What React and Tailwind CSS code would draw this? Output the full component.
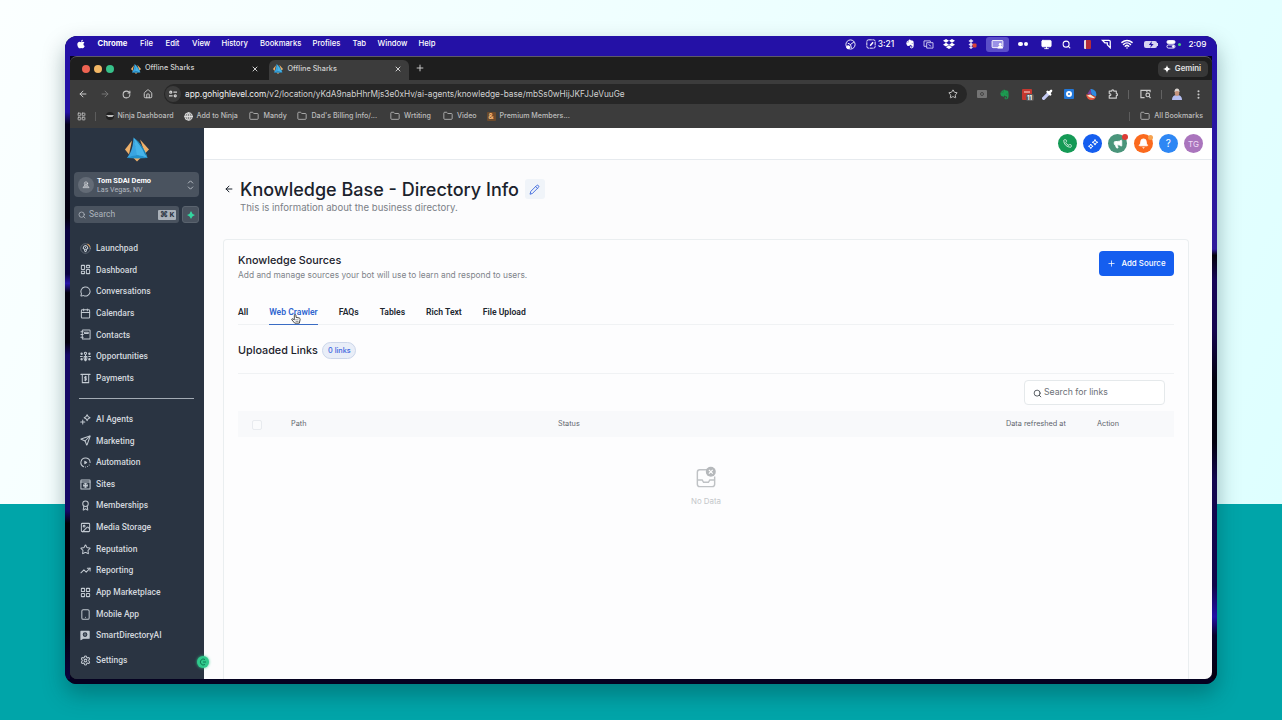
import React from 'react';
import {
    ArrowLeft, ArrowRight, RotateCw, House, Star, Folder, Search, Wifi, MoreVertical,
    MessageCircle, Calendar, LayoutGrid, Send, Award, Image, TrendingUp, Settings,
    Phone, Plus, X, Megaphone, Bell, Monitor, Globe, LayoutDashboard
} from 'lucide-react';
import { FaApple, FaDropbox, FaEvernote } from 'react-icons/fa';

const menuItems = [
    { label: 'Chrome', width: 'w-[42.5px] font-bold' },
    { label: 'File', width: 'w-[25.5px] font-medium' },
    { label: 'Edit', width: 'w-[26.5px] font-medium' },
    { label: 'View', width: 'w-[29.5px] font-medium' },
    { label: 'History', width: 'w-[38.5px] font-medium' },
    { label: 'Bookmarks', width: 'w-[52.5px] font-medium' },
    { label: 'Profiles', width: 'w-[40px] font-medium' },
    { label: 'Tab', width: 'w-[25px] font-medium' },
    { label: 'Window', width: 'w-[41px] font-medium' },
    { label: 'Help', width: 'w-[30px] font-medium' }
];

// Wraps raw paths so they can be used like the lucide icons in the nav lists
const lineIcon = (children) => function LineIcon({ className, strokeWidth = 2 }) {
    return (
        <svg viewBox="0 0 24 24" className={className} fill="none" stroke="currentColor" strokeWidth={strokeWidth} strokeLinecap="round" strokeLinejoin="round">
            {children}
        </svg>
    );
};

const LaunchpadIcon = lineIcon(
    <>
        <circle cx="12" cy="12" r="10.500" strokeWidth="1.200" opacity=".6" />
        <path d="M17 2.800a10.500 10.500 0 0 1 5 6" stroke="#d99a58" />
        <path d="M9.500 13.500 7 12q0-5.500 5-6.500 5 1 5 6.500l-2.500 1.500zM10 14v3l2 2 2-2v-3M12 9.500v.5" />
    </>
);
const ContactsIcon = lineIcon(
    <>
        <rect x="5" y="2" width="17" height="20" rx="1.500" />
        <path d="M2 6h5M2 12h5M2 18h5M10 7h8v3h-8z" />
    </>
);
const OpportunitiesIcon = lineIcon(
    <>
        <circle cx="12" cy="5" r="2.500" />
        <circle cx="3.500" cy="6" r="1.500" fill="currentColor" />
        <circle cx="20.500" cy="6" r="1.500" fill="currentColor" />
        <circle cx="3.500" cy="18" r="1.500" fill="currentColor" />
        <circle cx="20.500" cy="18" r="1.500" fill="currentColor" />
        <path d="M12 8v12M9 12h6v5l-2 4h-2l-2-4zM1 12h4M19 12h4" />
    </>
);
const PaymentsIcon = lineIcon(
    <>
        <path d="M2 3h20M5 3v18h14V3" />
        <path d="M14.500 8.500h-3.500q-2 1.700 0 3.500h2q2 1.700 0 3.500H9.500M12 7v10" />
    </>
);
const SparkIcon = lineIcon(
    <>
        <path d="M15.500 1.500q1 5 6.500 6.500-5.500 1.500-6.500 6.500-1-5-6.500-6.500 5.500-1.500 6.500-6.500zM6 13v9M1.500 17.500h9" />
    </>
);
const AutomationIcon = lineIcon(
    <>
        <path d="M8 21.200A10 10 0 1 1 22 12M12 22h.1M16.500 20.800h.1M20 17.500h.1" />
        <path d="M10.500 9.500v5l4-2.500z" fill="currentColor" />
    </>
);
const SitesIcon = lineIcon(
    <>
        <rect x="2" y="2" width="20" height="20" rx="1" />
        <path d="M2 6.500h20" />
        <circle cx="12" cy="14" r="4" />
        <path d="M8 14h8M12 10v8" />
    </>
);
const MobileIcon = lineIcon(
    <>
        <rect x="4" y="1.500" width="16" height="21" rx="3" />
        <path d="M12 18v.1" />
    </>
);
const DirectoryIcon = lineIcon(
    <>
        <path d="M2 3h18v15H7l-5 3z" fill="currentColor" />
        <circle cx="11" cy="10" r="4" stroke="#2a3442" fill="#65707d" />
    </>
);
const LocationIcon = lineIcon(
    <>
        <circle cx="12" cy="7.500" r="5" />
        <path d="M8 13 3 20h18l-5-7M12 7v6M8 17h8" />
    </>
);
const PenIcon = lineIcon(
    <>
        <path d="M2.500 21.500 4 16 16.500 3.500q2-2 4 0t0 4L8 20zM14.500 5.500l4 4" />
    </>
);
const PuzzleIcon = lineIcon(
    <>
        <path d="M3 5h6q0-3 2.500-3T14 5h6v6q3 0 3 2.500T20 16v6H3v-6q4 0 4-2.500T3 11z" />
    </>
);

const mainNav = [
    { label: 'Launchpad', icon: LaunchpadIcon },
    { label: 'Dashboard', icon: LayoutDashboard },
    { label: 'Conversations', icon: MessageCircle },
    { label: 'Calendars', icon: Calendar },
    { label: 'Contacts', icon: ContactsIcon },
    { label: 'Opportunities', icon: OpportunitiesIcon },
    { label: 'Payments', icon: PaymentsIcon }
];

const toolNav = [
    { label: 'AI Agents', icon: SparkIcon },
    { label: 'Marketing', icon: Send },
    { label: 'Automation', icon: AutomationIcon },
    { label: 'Sites', icon: SitesIcon },
    { label: 'Memberships', icon: Award },
    { label: 'Media Storage', icon: Image },
    { label: 'Reputation', icon: Star },
    { label: 'Reporting', icon: TrendingUp },
    { label: 'App Marketplace', icon: LayoutGrid },
    { label: 'Mobile App', icon: MobileIcon },
    { label: 'SmartDirectoryAI', icon: DirectoryIcon }
];

const sourceTabs = ['All', 'Web Crawler', 'FAQs', 'Tables', 'Rich Text', 'File Upload'];

function SharkLogo({ className }) {
    return (
        <svg viewBox="0 0 24 24" className={className}>
            <path d="M7 3 L0 12 L4 17 Z" fill="#eeb06a" />
            <path d="M15 2 L24 12 L20 16 Z" fill="#eeb06a" />
            <path d="M8 20 L12 24 L16 20 Z" fill="#eeb06a" />
            <path d="M8.500 0 C8 8 7 14 2 20.500 L13 18 Z" fill="#3aa5e2" />
            <path d="M8.500 0 C15 5 20 12 22.500 20.500 L12 18 Z" fill="#46b4ea" />
            <path d="M8.500 0 C15 5 20 12 22.500 20 L20 17 C17 10 13 5 8.500 0 Z" fill="#1d7fae" />
            <path d="M2 20.500 Q12 15 22.500 20.500 L12 21 Z" fill="#2391cc" />
        </svg>
    );
}

function Slot({ className, children }) {
    return <div className={`flex shrink-0 items-center justify-center ${className}`}>{children}</div>;
}

function MenuBar() {
    return (
        <div className="flex h-5 shrink-0 items-center bg-[#2411a6] pb-[5px] pl-[11px] pt-px text-white">
            <FaApple className="mr-[11.500px] h-[10px] w-[10px]" />
            {menuItems.map(item => (
                <span key={item.label} className={`shrink-0 whitespace-nowrap text-[7.7px] ${item.width}`}>
                    {item.label}
                </span>
            ))}
            <div className="ml-auto flex h-[15px] items-center">
                <Slot className="w-5">
                    <svg viewBox="0 0 12 12" className="h-[11px] w-[11px]" fill="none" stroke="white">
                        <circle cx="6" cy="6" r="5" />
                        <path d="M3 4.500 L6 6 L10 3 M6 6 L7 10" />
                        <circle cx="3.500" cy="9" r="1.700" fill="white" />
                    </svg>
                </Slot>
                <Slot className="w-10 gap-[2px]">
                    <svg viewBox="0 0 12 12" className="h-[10px] w-[10px]" fill="none" stroke="white" strokeWidth="1.1">
                        <rect x="1" y="1" width="10" height="10" rx="2" strokeDasharray="4 .6" />
                        <path d="M5 8 L8.500 4" strokeWidth="1.800" />
                    </svg>
                    <span className="text-[8.4px] font-medium">3:21</span>
                </Slot>
                <Slot className="w-[20px]"><FaEvernote className="h-[10px] w-[10px]" /></Slot>
                <Slot className="w-[16px]">
                    <svg viewBox="0 0 12 10" className="h-[9px] w-[11px]" fill="none" stroke="#d8d4f5">
                        <path d="M8 2.500V1H1v6h3M4 3h7v6H4z M6 5l3 2" />
                    </svg>
                </Slot>
                <Slot className="w-[26px]"><FaDropbox className="h-[12px] w-[12px]" /></Slot>
                <Slot className="w-5">
                    <svg viewBox="0 0 10 10" className="h-[10px] w-[10px]">
                        <path d="M4 0l2.500 2L4 4 1.500 2zM4 3.500l2.500 2L4 7.500 1.500 5.500zM4 7l2 1.500L4 10 2 8.500z" fill="#ded9f5" />
                        <rect x="5.500" y="4.500" width="4" height="4" rx="1" fill="#dc4438" />
                    </svg>
                </Slot>
                <Slot className="ml-1 h-[15px] w-[23px] rounded-[3px] bg-[#5b4fc8]">
                    <svg viewBox="0 0 13 10" className="h-[9px] w-[13px]">
                        <rect x=".5" y=".5" width="12" height="8" rx="1" fill="#9a93e6" stroke="white" />
                        <circle cx="9.500" cy="5" r="1.600" fill="white" />
                        <path d="M6.500 9.500q0-3 3-3t3 3z" fill="white" />
                    </svg>
                </Slot>
                <Slot className="w-7 gap-px">
                    <div className="h-[4.500px] w-[4.500px] rounded-full bg-white" />
                    <div className="h-[4.500px] w-[4.500px] rounded-full bg-white" />
                </Slot>
                <Slot className="w-[18px]"><Monitor className="h-[11px] w-[11px] fill-white" /></Slot>
                <Slot className="w-[22px]"><Search className="h-[9px] w-[9px]" strokeWidth={2.8} /></Slot>
                <Slot className="w-5">
                    <div className="h-[9px] w-[7px] rounded-[1px] border-l-2 border-[#ead9dc] bg-[#b52c39]" />
                </Slot>
                <Slot className="w-[18px]">
                    <svg viewBox="0 0 12 12" className="h-[10px] w-[11px]" fill="none" stroke="white" strokeWidth="1.500">
                        <path d="M1 1.500h8q1.500 0 1.500 1.500v7.500L7 7V4.500H4z" />
                    </svg>
                </Slot>
                <Slot className="w-6"><Wifi className="h-[12px] w-[12px]" strokeWidth={3} /></Slot>
                <Slot className="w-6">
                    <div className="flex h-[7px] w-[13px] items-center justify-center rounded-[2px] bg-[#d8d5f2]">
                        <svg viewBox="0 0 8 8" className="h-[7px] w-[8px]" fill="#2411a6"><path d="M5 0L1.500 4.500H4L3 8l4-4.500H4.500z" /></svg>
                    </div>
                    <div className="h-[3px] w-px bg-[#d8d5f2]" />
                </Slot>
                <Slot className="w-5 gap-[2px]">
                    <svg viewBox="0 0 10 10" className="h-[9px] w-[10px]" stroke="white" fill="none">
                        <rect x=".5" y=".5" width="9" height="3.500" rx="1.700" fill="white" />
                        <rect x=".5" y="5.500" width="9" height="3.500" rx="1.700" />
                        <circle cx="7.500" cy="7.200" r="1" fill="white" />
                    </svg>
                    <div className="h-[3px] w-[3px] rounded-full bg-[#45d37c]" />
                </Slot>
                <span className="w-[34px] pl-[5.500px] text-[8.2px] font-medium">2:09</span>
            </div>
        </div>
    );
}

function BrowserTab({ active }) {
    return (
        <div className={`flex items-center ${active ? 'h-[20px] w-[140px] self-end rounded-t-[6px] bg-[#3c3c3c] pb-[2px] pl-[4px]' : 'h-[23px] w-[138px] pl-[2.500px]'}`}>
            <SharkLogo className="h-[10px] w-[10px]" />
            <span className={`ml-[4.500px] text-[7.3px] font-medium text-[#cfcfcf] ${active ? '' : 'pb-[.5px]'}`}>Offline Sharks</span>
            <X className={`ml-auto h-[8px] w-[8px] text-[#dcdcdc] ${active ? 'mr-[7px]' : 'mr-[7px]'}`} strokeWidth={2.8} />
        </div>
    );
}

function TabStrip() {
    return (
        <div className="flex h-[23px] shrink-0 items-center bg-[#1e1e1e] pl-3 pr-1">
            <div className="flex w-[46px] gap-[4px]">
                <div className="h-[8px] w-[8px] rounded-full bg-[#ee6352]" />
                <div className="h-[8px] w-[8px] rounded-full bg-[#f2b765]" />
                <div className="h-[8px] w-[8px] rounded-full bg-[#37c18a]" />
            </div>
            <BrowserTab />
            <div className="w-[3px]" />
            <BrowserTab active />
            <Plus className="mb-px ml-[6px] h-[10px] w-[10px] text-[#d4d4d4]" strokeWidth={2.2} />
            <div className="ml-auto flex h-4 w-[50px] items-center justify-center gap-1 rounded-[5px] bg-[#373737] pr-[2px] text-[7.8px] font-semibold text-[#e4e4e4]">
                <svg viewBox="0 0 10 10" className="h-2 w-2" fill="white"><path d="M5 0Q5.500 4.500 10 5 5.500 5.500 5 10 4.500 5.500 0 5 4.500 4.500 5 0z" /></svg>
                Gemini
            </div>
        </div>
    );
}

function Toolbar() {
    return (
        <div className="flex h-[28px] shrink-0 items-center bg-[#3c3c3c] pl-2 text-[#c9c9c9]">
            <ArrowLeft className="h-[10px] w-[10px]" strokeWidth={2.4} />
            <ArrowRight className="ml-[12px] h-[10px] w-[10px] text-[#7c7c7c]" strokeWidth={2.2} />
            <RotateCw className="ml-[11.500px] h-[9px] w-[9px]" strokeWidth={2.8} />
            <House className="ml-[12px] h-[10px] w-[10px]" strokeWidth={2.4} />
            <div className="ml-[11.500px] flex h-5 w-[803px] items-center rounded-full bg-[#272727] pl-px pr-[9px]">
                <div className="flex h-4 w-4 items-center justify-center rounded-full bg-[#3c3c3c]">
                    <svg viewBox="0 0 10 10" className="h-2 w-2" fill="none" stroke="#d4d4d4" strokeWidth="1.500">
                        <circle cx="2.200" cy="2.700" r="1.300" />
                        <path d="M5.500 2.700H10M0 7.300H4.500" />
                        <circle cx="7.800" cy="7.300" r="1.300" />
                    </svg>
                </div>
                <span className="ml-[4px] whitespace-nowrap text-[8.28px] text-[#d2d2d2]">
                    <span className="text-[#f0f0f0]">app.gohighlevel.com</span>/v2/location/yKdA9nabHhrMjs3e0xHv/ai-agents/knowledge-base/mbSs0wHijJKFJJeVuuGe
                </span>
                <Star className="ml-auto h-[10px] w-[10px]" strokeWidth={2.3} />
            </div>
            <div className="ml-[4px] flex items-center">
                <Slot className="w-[22px]">
                    <div className="flex h-[8px] w-[10px] items-center justify-center rounded-[1px] bg-[#747474]">
                        <div className="h-[4px] w-[4px] rounded-full border border-[#444444]" />
                    </div>
                </Slot>
                <Slot className="w-[23px]"><FaEvernote className="h-[11px] w-[11px] text-[#1c9a50]" /></Slot>
                <Slot className="w-[21px]">
                    <div className="relative h-[11px] w-[10px] rounded-[1px] bg-[#c6372f]">
                        <div className="mx-[2px] mt-[2px] h-[2px] bg-[#e58b84]" />
                        <span className="absolute left-[4px] top-[5px] rounded-[2px] bg-[#5a5a5a] px-[1.500px] text-[6px] font-bold leading-[7px] text-white">11</span>
                    </div>
                </Slot>
                <Slot className="w-[21px]">
                    <svg viewBox="0 0 10 10" className="h-[11px] w-[11px]">
                        <path d="M1.500 8.500L6.500 3.500" stroke="#c3c9f2" strokeWidth="3" strokeLinecap="round" />
                        <path d="M5 2.500L7.500 5M6.500 3.500L8.300 1.700" stroke="white" strokeWidth="2.200" strokeLinecap="round" />
                    </svg>
                </Slot>
                <Slot className="w-[22px]">
                    <div className="flex h-[10px] w-[10px] items-center justify-center rounded-[1px] bg-[#2277d8]">
                        <div className="h-[6px] w-[6px] rounded-full border-2 border-white" />
                    </div>
                </Slot>
                <Slot className="w-[22px]">
                    <svg viewBox="0 0 10 10" className="h-[11px] w-[11px]">
                        <path d="M4 0a5 5 0 0 1 5 7L5 5z" fill="#2f8be0" />
                        <path d="M4 0L5 5 1 5z" fill="#7a3fa0" />
                        <path d="M0 5q1 5 5 5 3 0 4-3L4 5z" fill="#e8553c" />
                        <path d="M1 6q3 3 7 2L4 5z" fill="#f7e9d0" />
                    </svg>
                </Slot>
                <Slot className="w-[21px]"><PuzzleIcon className="h-[10px] w-[10px]" strokeWidth={2.8} /></Slot>
                <Slot className="w-[10px]"><div className="h-[9px] w-px bg-[#626262]" /></Slot>
                <Slot className="w-6">
                    <svg viewBox="0 0 12 10" className="h-[10px] w-[11px]" fill="none" stroke="#c9c9c9" strokeWidth="1.300">
                        <path d="M5 9H1V1h10v2" />
                        <circle cx="8.500" cy="6" r="2" />
                        <path d="M10 7.500L11.500 9.500M7.500 1v2" />
                    </svg>
                </Slot>
                <Slot className="w-2"><div className="h-[9px] w-px bg-[#626262]" /></Slot>
                <Slot className="w-6">
                    <svg viewBox="0 0 12 12" className="h-[12px] w-[12px]">
                        <path d="M1 12q0-5 5-5t5 5z" fill="#b4bdf0" />
                        <rect x="3.800" y="1" width="4.400" height="7" rx="2.200" fill="#c4937c" />
                        <path d="M3.500 4q0-3.500 2.500-3.500T8.500 4Q6 2 3.500 4z" fill="#d9d4d0" />
                    </svg>
                </Slot>
                <Slot className="w-[18px]"><MoreVertical className="h-[11px] w-[11px]" strokeWidth={2.5} /></Slot>
            </div>
        </div>
    );
}

function BookmarkFolder({ label, className }) {
    return (
        <div className={`flex shrink-0 items-center gap-[4.500px] ${className}`}>
            <Folder className="h-[10px] w-[10px]" strokeWidth={2} />
            {label}
        </div>
    );
}

function BookmarksBar() {
    return (
        <div className="flex h-[20px] shrink-0 items-center whitespace-nowrap bg-[#3c3c3c] pb-[3px] pl-[7px] pr-[9px] text-[7.1px] font-medium text-[#bdbdbd]">
            <LayoutGrid className="h-[9px] w-[9px]" strokeWidth={2.4} />
            <div className="ml-[9px] h-[9px] w-px bg-[#5c5c5c]" />
            <div className="ml-[9.500px] flex w-[78px] items-center gap-[4px]">
                <svg viewBox="0 0 10 10" className="h-2 w-2"><circle cx="5" cy="5" r="5" fill="#222222" /><path d="M0 4h10L8 6H3z" fill="#eeeeee" /></svg>
                Ninja Dashboard
            </div>
            <div className="flex w-[65.500px] items-center gap-[4px]">
                <Globe className="h-[9px] w-[9px] fill-[#8a8a8a] text-[#e4e4e4]" strokeWidth={2.4} />
                Add to Ninja
            </div>
            <BookmarkFolder label="Mandy" className="w-[48px]" />
            <BookmarkFolder label="Dad's Billing Info/..." className="w-[92.500px]" />
            <BookmarkFolder label="Wrtiting" className="w-[53px]" />
            <BookmarkFolder label="Video" className="w-[44px]" />
            <div className="flex items-center gap-[4px]">
                <span className="flex h-[9px] w-[9px] items-center justify-center rounded-[1px] bg-[#6b4a2c] text-[8px] font-bold leading-none text-[#f0b070]">&amp;</span>
                Premium Members...
            </div>
            <div className="ml-auto h-[9px] w-px bg-[#5c5c5c]" />
            <BookmarkFolder label="All Bookmarks" className="ml-[10px]" />
        </div>
    );
}

function NavItem({ label, icon: Icon }) {
    return (
        <div className="flex h-[21.65px] shrink-0 items-center gap-[5.500px] pl-[9.500px]">
            <Icon className="h-[11px] w-[11px] text-[#c2c9d1]" strokeWidth={2.2} />
            <span className="whitespace-nowrap text-[8.5px] font-medium text-[#d2d7dd]">{label}</span>
        </div>
    );
}

function Sidebar() {
    return (
        <div className="relative flex w-[134px] shrink-0 flex-col bg-[#2a3442] font-['Roboto',sans-serif]">
            <SharkLogo className="ml-[55px] mt-[9px] h-[25px] w-[24px] shrink-0" />
            <div className="mx-[4px] mt-[10px] flex h-[25px] w-[125px] shrink-0 items-center rounded-[4px] bg-[#4a535f] pl-[4px] pr-[4px]">
                <div className="flex h-[16px] w-[16px] items-center justify-center rounded-full bg-[#636b76]">
                    <LocationIcon className="h-[8px] w-[8px] text-[#e0e3e6]" />
                </div>
                <div className="ml-[3px] pt-px">
                    <div className="text-[7.4px] font-bold leading-[9px] text-white">Tom SDAI Demo</div>
                    <div className="text-[7.1px] leading-[9px] text-[#b4bac1]">Las Vegas, NV</div>
                </div>
                <svg viewBox="0 0 8 12" className="ml-auto mr-[1px] h-[10px] w-[7px]" fill="none" stroke="#b4bac1" strokeWidth="1.200">
                    <path d="M1 4l3-3 3 3M1 8l3 3 3-3" />
                </svg>
            </div>
            <div className="ml-[4px] mt-[9px] flex shrink-0 gap-[3px]">
                <div className="flex h-[17px] w-[105px] items-center rounded-[3px] bg-[#4a535f] pl-[4px] pr-[3px] text-[#aeb5bd]">
                    <Search className="h-[8px] w-[8px]" strokeWidth={2.5} />
                    <span className="ml-[3px] text-[8.5px]">Search</span>
                    <span className="ml-auto flex h-[10px] w-[18px] items-center justify-center gap-[2px] rounded-[1px] bg-[#aab1b9] text-[7.5px] font-bold text-[#2a3442]">
                        <span>⌘</span>
                        <span>K</span>
                    </span>
                </div>
                <div className="flex h-[17px] w-[17px] items-center justify-center rounded-[3px] border border-[#5a636e] bg-[#4a535f]">
                    <svg viewBox="0 0 10 10" className="h-2 w-2" fill="#33d6a0"><path d="M5 0Q6 4 10 5 6 6 5 10 4 6 0 5 4 4 5 0z" /></svg>
                </div>
            </div>
            <div className="mt-[14.500px] shrink-0">
                {mainNav.map(item => <NavItem key={item.label} {...item} />)}
            </div>
            <div className="ml-[9px] mr-[10px] mt-[9px] h-px shrink-0 bg-[#a3abb4]" />
            <div className="mt-[9.500px] shrink-0">
                {toolNav.map(item => <NavItem key={item.label} {...item} />)}
            </div>
            <div className="mt-[3.500px]">
                <NavItem label="Settings" icon={Settings} />
            </div>
            <div className="absolute -right-[5px] bottom-[11.500px] z-10 flex h-[12px] w-[12px] items-center justify-center rounded-full bg-[#2fc98c] shadow-[0_0_3px_#2fc98c]">
                <svg viewBox="0 0 8 8" className="h-[8px] w-[8px]" fill="none" stroke="#0f7d56"><path d="M6 1.500A3 3 0 1 0 6 6.500M4 4h3" /></svg>
            </div>
        </div>
    );
}

function HeaderActions() {
    return (
        <div className="flex h-[32px] shrink-0 items-center justify-end gap-[6.200px] border-b border-[#e6eaee] bg-white pr-[9px] text-white">
            <Slot className="h-[19px] w-[19px] rounded-full bg-[#159a56]"><Phone className="h-[9px] w-[9px]" /></Slot>
            <Slot className="h-[19px] w-[19px] rounded-full bg-[#155eef]">
                <svg viewBox="0 0 12 12" className="h-[12px] w-[12px]" fill="none" stroke="white">
                    <path d="M8 1.500l.8 2 2 .8-2 .8-.8 2-.8-2-2-.8 2-.8zM3.800 6l.7 1.600 1.600.7-1.600.7-.7 1.600-.7-1.600-1.600-.7 1.600-.7z" />
                </svg>
            </Slot>
            <Slot className="relative h-[19px] w-[19px] rounded-full bg-[#4a957b]">
                <Megaphone className="h-[10px] w-[10px] fill-white" />
                <div className="absolute -right-px top-0 h-[6px] w-[6px] rounded-full bg-[#dc3b34]" />
            </Slot>
            <Slot className="relative h-[19px] w-[19px] rounded-full bg-[#fb6a1e]">
                <Bell className="h-[11px] w-[11px] fill-white" />
                <div className="absolute right-0 top-[1px] h-[5px] w-[5px] rounded-full bg-[#f6a24f]" />
            </Slot>
            <Slot className="h-[19px] w-[19px] rounded-full bg-[#2e87f4] text-[10px]">?</Slot>
            <Slot className="h-[19px] w-[19px] rounded-full bg-[#aa75bd] text-[8px] text-[#f0dcf6]">TG</Slot>
        </div>
    );
}

function HandCursor() {
    return (
        <svg viewBox="0 0 12 12" className="absolute left-[22px] top-[13px] h-[10px] w-[10px]">
            <path d="M4 5V2q0-1.200 1-1.200T6 2v2l4 .8q1 .3 1 1.500L10 11H4.500L1 7q-.4-1.500 1-1.300L4 7z" fill="white" stroke="#3a3a3a" strokeWidth="1.100" />
            <path d="M5 7h4M5.500 9h3.500" stroke="#6a6a6a" strokeWidth=".8" />
        </svg>
    );
}

function NoData() {
    return (
        <div className="mt-[28px] flex flex-col items-center">
            <svg viewBox="0 0 24 26" className="h-[25px] w-[24px]" fill="none" stroke="#bfc2c5" strokeWidth="1.500">
                <path d="M13 5H5.500Q3 5 3 7.500V20q0 2.500 2.500 2.500h13Q21 22.500 21 20V12M3 15.500h5l1.500 2.500h5l1.500-2.500h5" />
                <circle cx="17" cy="7" r="5.200" fill="#b5b8bb" stroke="none" />
                <path d="M15 5l4 4M19 5l-4 4" stroke="white" strokeWidth="1.200" />
            </svg>
            <span className="mt-[6px] text-[7.9px] text-[#c4c7ca]">No Data</span>
        </div>
    );
}

function KnowledgeCard() {
    return (
        <div className="ml-[19px] mt-[23px] flex min-h-0 w-[966px] flex-1 flex-col rounded-t-[4px] border border-b-0 border-[#eaeef0] bg-[#fdfdfe] px-[14px]">
            <div className="mt-[11px] flex h-[31px] shrink-0 justify-between">
                <div>
                    <h2 className="mt-[3px] text-[10.8px] font-medium leading-[14px] text-[#1b222c]">Knowledge Sources</h2>
                    <p className="mt-px text-[8.4px] leading-[13px] text-[#7f848b]">Add and manage sources your bot will use to learn and respond to users.</p>
                </div>
                <button className="flex h-[25px] w-[75px] items-center justify-center gap-[5px] rounded-[4px] bg-[#155eef] text-[7.9px] font-medium text-white">
                    <Plus className="h-[9px] w-[9px]" />
                    Add Source
                </button>
            </div>
            <div className="mt-[19px] flex h-[24px] shrink-0 gap-[21px] border-b border-[#f0f2f4] font-['Roboto',sans-serif]">
                {sourceTabs.map(tab => (
                    <div key={tab} className={`relative h-[24px] whitespace-nowrap pt-[4px] text-[8.6px] font-semibold leading-[15px] ${tab === 'Web Crawler' ? 'border-b-[1.500px] border-[#3a6cc4] text-[#2f65cf]' : 'text-[#20262e]'}`}>
                        {tab}
                        {tab === 'Web Crawler' && <HandCursor />}
                    </div>
                ))}
            </div>
            <div className="flex h-[49px] shrink-0 items-center gap-[4.500px] border-b border-[#f0f2f4] pt-[3px]">
                <span className="pt-px text-[10.8px] font-medium text-[#1b222c]">Uploaded Links</span>
                <span className="flex h-[17px] w-[34px] items-center justify-center rounded-full border border-[#ccd6ea] bg-[#e9eef8] pt-px text-[7.3px] font-medium text-[#3e68de]">0 links</span>
            </div>
            <div className="mr-[9px] mt-[6px] flex h-[25px] w-[141px] shrink-0 items-center gap-[2px] self-end rounded-[4px] border border-[#e5e9eb] bg-white pl-[8px] pt-px text-[8.7px] text-[#6c7177]">
                <Search className="h-[9px] w-[9px] text-[#3f454c]" strokeWidth={2.3} />
                Search for links
            </div>
            <div className="mt-[6px] flex h-[26px] shrink-0 items-center bg-[#f8f9fb] pl-[14px] pt-px text-[7.3px] text-[#5f656d]">
                <div className="h-[10px] w-[10px] rounded-[2px] border border-[#e8ebef] bg-[#fafbfc]" />
                <span className="ml-[29px] w-[267px]">Path</span>
                <span className="w-[448px]">Status</span>
                <span className="w-[91px]">Data refreshed at</span>
                <span>Action</span>
            </div>
            <NoData />
        </div>
    );
}

function MainPage() {
    return (
        <div className="flex min-w-0 flex-1 flex-col bg-[#fcfcfd]">
            <HeaderActions />
            <div className="mt-[18px] flex h-[22px] shrink-0 items-center pl-5">
                <ArrowLeft className="h-[10px] w-[10px] text-[#1b222c]" strokeWidth={2.4} />
                <h1 className="ml-[6px] whitespace-nowrap text-[18px] font-medium text-[#1b222c]">Knowledge Base - Directory Info</h1>
                <div className="ml-[6px] flex h-[20px] w-[20px] items-center justify-center rounded-[3px] bg-[#f0f4f9]">
                    <PenIcon className="h-[11px] w-[11px] text-[#3c68dd]" />
                </div>
            </div>
            <p className="ml-9 h-[16px] shrink-0 whitespace-nowrap text-[9.6px] leading-[16px] text-[#7b8087]">This is information about the business directory.</p>
            <KnowledgeCard />
        </div>
    );
}

export default function App() {
    return (
        <div className="h-[720px] w-[1282px] overflow-hidden bg-[linear-gradient(to_bottom,transparent_504px,#00a5a9_504px),linear-gradient(115deg,#fbffff_0%,#eeffff_45%,#dcffff_100%)] pl-[65px] pt-9 font-['Inter',sans-serif] leading-normal">
            <div className="flex h-[648px] w-[1152px] flex-col overflow-hidden rounded-[12px] bg-[#05021f] shadow-[0_10px_22px_rgba(0,40,45,0.34)]">
                <MenuBar />
                <div className="flex min-h-0 flex-1">
                    <div className="w-[5px] bg-[linear-gradient(#2411a6_0%,#2411a6_9%,#06021c_11%,#04010f_26%,#0a0340_28%,#0a0340_35%,#2815a8_36.5%,#04010f_38%,#04010f_46%,#150865_48%,#150865_73%,#020108_75%,#020108_92%,#0b0440_100%)]" />
                    <div className="flex min-w-0 flex-1 flex-col overflow-hidden rounded-[7px] border-t border-[#5d5a68] bg-[#3c3c3c]">
                        <TabStrip />
                        <Toolbar />
                        <BookmarksBar />
                        <div className="flex min-h-0 flex-1">
                            <Sidebar />
                            <MainPage />
                        </div>
                    </div>
                    <div className="w-[5px] bg-[linear-gradient(#2411a6_0%,#301b9c_31%,#05020c_32%,#170558_36%,#150550_44%,#03010f_52%,#03010f_62%,#130750_68%,#10064a_85%,#2411a6_90%,#08022a_93%,#04010f_100%)]" />
                </div>
                <div className="h-[5px] shrink-0 bg-[#050120]" />
            </div>
        </div>
    );
}
